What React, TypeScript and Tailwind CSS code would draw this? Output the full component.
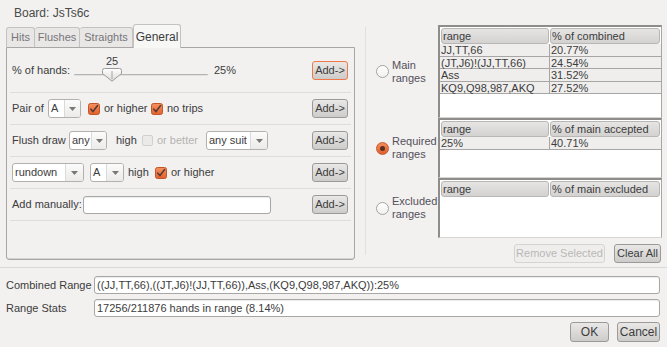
import type { ReactNode } from "react";
import clsx from "clsx";

function Btn({ children, focus, disabled, className }: { children: ReactNode; focus?: boolean; disabled?: boolean; className?: string }) {
  return (
    <button
      type="button"
      className={clsx(
        "flex h-[19px] items-center justify-center whitespace-nowrap rounded-[3px] border text-[11px] leading-none",
        disabled
          ? "border-[#d6d4d2] bg-[#efeeed] text-[#bab8b6]"
          : "bg-gradient-to-b from-[#e9e8e7] to-[#cdcccb] text-[#3c3c3c]",
        focus ? "border-[#f07746]" : !disabled && "border-[#9c9a98]",
        className
      )}
    >
      {children}
    </button>
  );
}

function Combo({ value, width, arrow = 16 }: { value: string; width: number; arrow?: number }) {
  return (
    <div
      className="flex h-[19px] shrink-0 overflow-hidden rounded-[3px] border border-[#b3b1af] bg-white"
      style={{ width }}
    >
      <span className="flex flex-1 items-center whitespace-nowrap pl-[2px] text-[#3c3c3c]">{value}</span>
      <span
        className="flex items-center justify-center border-l border-[#dcdad8] bg-gradient-to-b from-[#fbfbfb] to-[#ecebea]"
        style={{ width: arrow }}
      >
        <svg width="7" height="4" viewBox="0 0 7 4">
          <path d="M0 0h7L3.5 4z" fill="#7a7876" />
        </svg>
      </span>
    </div>
  );
}

function Check({ checked, disabled }: { checked?: boolean; disabled?: boolean }) {
  if (!checked) {
    return (
      <span
        className={clsx(
          "h-[11px] w-[11px] shrink-0 rounded-[2px] border",
          disabled ? "border-[#d2d0ce] bg-[#ebeae9]" : "border-[#a09e9c] bg-white"
        )}
      />
    );
  }
  return (
    <svg width="12" height="12" viewBox="0 0 12 12" className="shrink-0">
      <defs>
        <linearGradient id="chk" x1="0" y1="0" x2="0" y2="1">
          <stop offset="0" stopColor="#f6915f" />
          <stop offset="1" stopColor="#e0612d" />
        </linearGradient>
      </defs>
      <rect x="0.5" y="0.5" width="11" height="11" rx="2" fill="url(#chk)" stroke="#c45526" />
      <path d="M2.8 6.2l2.2 2.4L9.6 2.6" fill="none" stroke="#5b3a35" strokeWidth="1.6" strokeLinecap="round" />
    </svg>
  );
}

function Radio({ checked }: { checked?: boolean }) {
  return checked ? (
    <span className="flex h-[13px] w-[13px] shrink-0 items-center justify-center rounded-full border border-[#c65a2c] bg-gradient-to-b from-[#f38c5a] to-[#de5f2b]">
      <span className="h-[5px] w-[5px] rounded-full bg-[#5a2e22]" />
    </span>
  ) : (
    <span className="h-[13px] w-[13px] shrink-0 rounded-full border border-[#a6a4a2] bg-gradient-to-b from-white to-[#f1f0ef]" />
  );
}

function Row({ children, height = 32, last, focus }: { children: ReactNode; height?: number; last?: boolean; focus?: boolean }) {
  return (
    <div
      className={clsx("mx-[3px] flex items-center pl-[2px] pr-[3px]", !last && "border-b border-[#dfdddb]")}
      style={{ height }}
    >
      {children}
      <div className="flex-1" />
      <Btn focus={focus} className="w-[36px]">Add-&gt;</Btn>
    </div>
  );
}

function RangeTable({ header, rows, height }: { header: string; rows: [string, string][]; height: number }) {
  return (
    <div
      className="flex w-[224px] flex-col border-t-2 border-l-2 border-r border-b border-t-[#8f8d8b] border-l-[#8f8d8b] border-r-[#a8a6a4] border-b-[#d8d6d4] bg-white"
      style={{ height }}
    >
      <div className="flex h-[17px] shrink-0 gap-[1px] px-[1px] pt-[1px]">
        <div className="flex w-[108px] items-center rounded-[3px] border border-[#b9b7b5] bg-gradient-to-b from-[#e6e5e4] to-[#d3d2d1] pl-[1px]">
          range
        </div>
        <div className="flex flex-1 items-center rounded-[3px] border border-[#b9b7b5] bg-gradient-to-b from-[#e6e5e4] to-[#d3d2d1] pl-[1px]">
          {header}
        </div>
      </div>
      {rows.map(([a, b]) => (
        <div key={a} className="flex h-[12.5px] shrink-0 bg-[#efeeed] leading-[12px]">
          <span className="w-[110px] border-r border-b border-[#a8a6a4] pl-[1px]">{a}</span>
          <span className="flex-1 border-b border-[#a8a6a4] pl-[1px]">{b}</span>
        </div>
      ))}
    </div>
  );
}

function RadioLabel({ checked, children }: { checked?: boolean; children: ReactNode }) {
  return (
    <div className="flex w-[62px] shrink-0 items-center gap-[3px] text-[11px] text-[#54505a]">
      <Radio checked={checked} />
      <span className="whitespace-nowrap leading-[13px]">{children}</span>
    </div>
  );
}

export default function App() {
  const sliderValue = 25;

  return (
    <div className="flex h-[347px] w-[667px] flex-col overflow-hidden bg-[#f2f1f0] font-['Liberation_Sans',Arial,sans-serif] text-[11px] text-[#3c3c3c]">
      <div className="flex h-[267px] shrink-0">
        {/* left: board + tabs */}
        <div className="flex w-[365px] shrink-0 flex-col pl-[6px]">
          <div className="flex h-[25px] items-center pl-[8px] pt-[1px] text-[12px] text-[#4a4a4a]">Board: JsTs6c</div>
          <div className="relative z-10 flex h-[22px] items-end">
            <div className="flex h-[20px] w-[29px] items-center justify-center rounded-t-[3px] border border-b-0 border-[#c4c2c0] bg-[#e8e7e6] text-[#77757a]">
              Hits
            </div>
            <div className="flex h-[20px] w-[45px] items-center justify-center rounded-t-[3px] border border-b-0 border-l-0 border-[#c4c2c0] bg-[#e8e7e6] text-[#77757a]">
              Flushes
            </div>
            <div className="flex h-[20px] w-[53px] items-center justify-center rounded-t-[3px] border border-b-0 border-l-0 border-[#c4c2c0] bg-[#e8e7e6] text-[#77757a]">
              Straights
            </div>
            <div className="mb-[-1px] flex h-[24px] w-[48px] items-center justify-center rounded-t-[3px] border border-b-0 border-[#c4c2c0] bg-[#f7f7f6] text-[12px]">
              General
            </div>
          </div>
          <div className="flex h-[213px] w-[349px] flex-col rounded-b-[3px] border border-[#a9a7a5] shadow-[inset_0_-1px_0_#d6d4d2]">
            <Row height={45} focus>
              <span className="w-[62px] shrink-0 pt-[1px]">% of hands:</span>
              <div className="relative h-[30px] w-[134px] shrink-0">
                <span className="absolute top-[-2px] w-[20px] text-center" style={{ left: sliderValue + 3 }}>
                  {sliderValue}
                </span>
                <div className="absolute left-0 right-0 top-[19px] h-[2px] rounded-full border-t border-[#b6b4b2] bg-[#e2e0de]" />
                <svg className="absolute top-[13px]" style={{ left: sliderValue + 3 }} width="20" height="14" viewBox="0 0 20 14">
                  <defs>
                    <linearGradient id="hnd" x1="0" y1="0" x2="0" y2="1">
                      <stop offset="0" stopColor="#ffffff" />
                      <stop offset="1" stopColor="#dcdad8" />
                    </linearGradient>
                  </defs>
                  <path d="M2.5 0.5h15a2 2 0 0 1 2 2v3L10 13.2 0.5 5.5v-3a2 2 0 0 1 2-2z" fill="url(#hnd)" stroke="#9c9a98" />
                  <path d="M10 3v8" stroke="#a8a6a4" />
                </svg>
              </div>
              <span className="ml-[6px] pt-[1px]">25%</span>
            </Row>
            <Row>
              <span className="w-[36px] shrink-0">Pair of</span>
              <Combo value="A" width={33} />
              <span className="ml-[7px]"><Check checked /></span>
              <span className="ml-[4px] w-[47px] shrink-0">or higher</span>
              <Check checked />
              <span className="ml-[4px]">no trips</span>
            </Row>
            <Row>
              <span className="w-[57px] shrink-0">Flush draw</span>
              <Combo value="any" width={38} arrow={15} />
              <span className="ml-[9px] w-[26px] shrink-0">high</span>
              <Check disabled />
              <span className="ml-[4px] w-[49px] shrink-0 text-[#b5b3b1]">or better</span>
              <Combo value="any suit" width={62} arrow={17} />
            </Row>
            <Row>
              <Combo value="rundown" width={72} arrow={18} />
              <span className="ml-[6px]"><Combo value="A" width={34} arrow={17} /></span>
              <span className="ml-[4px] w-[27px] shrink-0">high</span>
              <Check checked />
              <span className="ml-[4px]">or higher</span>
            </Row>
            <Row>
              <span className="w-[71px] shrink-0">Add manually:</span>
              <div className="h-[18px] w-[188px] rounded-[3px] border border-[#a9a7a5] bg-white shadow-[inset_0_1px_1px_rgba(0,0,0,0.08)]" />
            </Row>
          </div>
        </div>

        <div className="mt-[27px] mb-[12px] w-px bg-[#e2e0de]" />

        {/* right: range tables */}
        <div className="flex flex-col pl-[10px] pt-[25px]">
          <div className="flex items-center">
            <RadioLabel>Main<br />ranges</RadioLabel>
            <RangeTable
              height={93}
              header="% of combined"
              rows={[
                ["JJ,TT,66", "20.77%"],
                ["(JT,J6)!(JJ,TT,66)", "24.54%"],
                ["Ass", "31.52%"],
                ["KQ9,Q98,987,AKQ", "27.52%"],
              ]}
            />
          </div>
          <div className="flex items-center">
            <RadioLabel checked>Required<br />ranges</RadioLabel>
            <RangeTable height={60} header="% of main accepted" rows={[["25%", "40.71%"]]} />
          </div>
          <div className="flex items-center">
            <RadioLabel>Excluded<br />ranges</RadioLabel>
            <RangeTable height={60} header="% of main excluded" rows={[]} />
          </div>
          <div className="mt-[6px] flex justify-end gap-[9px] pr-[1px]">
            <Btn disabled className="w-[91px] text-[11.5px]">Remove Selected</Btn>
            <Btn className="w-[47px] text-[11.5px]">Clear All</Btn>
          </div>
        </div>
      </div>

      {/* bottom */}
      <div className="h-px shrink-0 bg-[#dcdad8]" />
      <div className="flex flex-col gap-[5px] pl-[6px] pr-[7px] pt-[8px]">
        <div className="flex h-[18px] items-center">
          <span className="w-[88px] shrink-0">Combined Range</span>
          <div className="flex h-[18px] flex-1 items-center rounded-[3px] border border-[#a9a7a5] bg-white pl-[2px] shadow-[inset_0_1px_1px_rgba(0,0,0,0.08)]">
            ((JJ,TT,66),((JT,J6)!(JJ,TT,66)),Ass,(KQ9,Q98,987,AKQ)):25%
          </div>
        </div>
        <div className="flex h-[18px] items-center">
          <span className="w-[88px] shrink-0">Range Stats</span>
          <div className="flex h-[18px] flex-1 items-center rounded-[3px] border border-[#a9a7a5] bg-white pl-[2px] shadow-[inset_0_1px_1px_rgba(0,0,0,0.08)]">
            17256/211876 hands in range (8.14%)
          </div>
        </div>
        <div className="flex justify-end gap-[8px]">
          <Btn className="h-[20px] w-[39px] text-[12px]">OK</Btn>
          <Btn className="h-[20px] w-[43px] text-[12px]">Cancel</Btn>
        </div>
      </div>
    </div>
  );
}
